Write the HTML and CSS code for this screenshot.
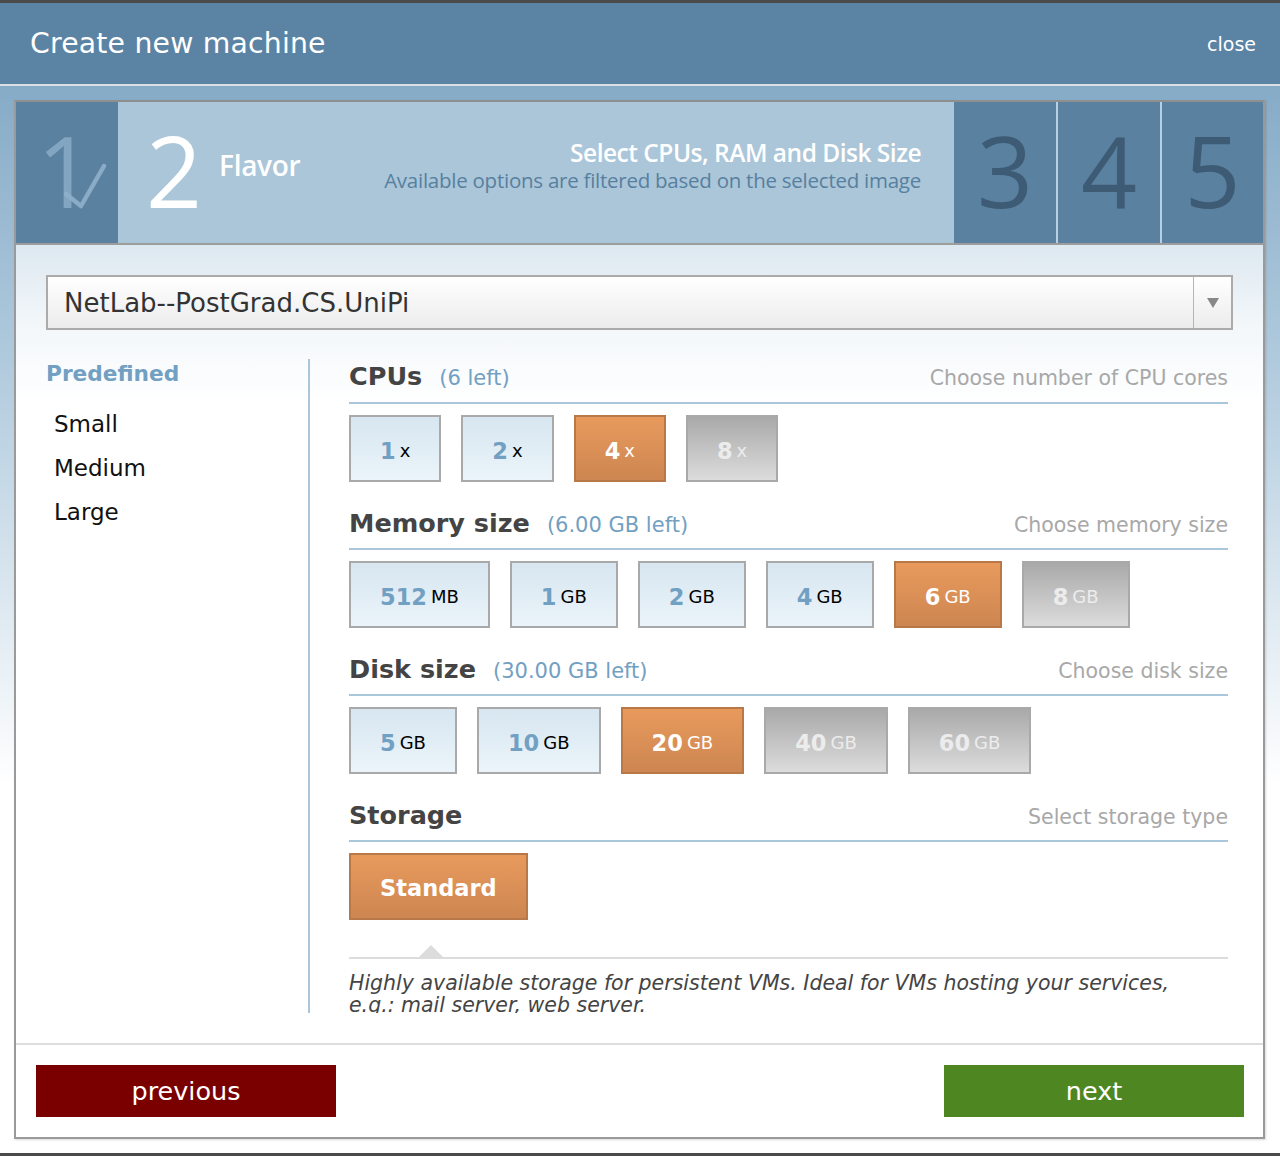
FILE: index.html
```html
<!DOCTYPE html>
<html>
<head>
<meta charset="utf-8">
<link rel="stylesheet" href="styles.css">
</head>
<body>
<div class="topstrip"></div>
<header class="header">
  <h1 class="title">Create new machine</h1>
  <span class="close">close</span>
</header>
<div class="stage">
  <div class="dialog">
    <div class="steps">
      <div class="step step-done">
        <span class="num">1</span>
        <svg class="check" width="60" height="60" viewBox="0 0 60 60"><path d="M8 36 L23 48 L46 8" fill="none" stroke="#8fb0ca" stroke-width="4.5" stroke-linecap="round" stroke-linejoin="round" opacity="0.9"/></svg>
      </div>
      <div class="step step-active">
        <span class="num">2</span>
        <span class="step-name">Flavor</span>
        <div class="step-desc">
          <div class="step-desc-title">Select CPUs, RAM and Disk Size</div>
          <div class="step-desc-sub">Available options are filtered based on the selected image</div>
        </div>
      </div>
      <div class="step step-todo"><span class="num">3</span></div>
      <div class="step step-todo sep"><span class="num">4</span></div>
      <div class="step step-todo sep last"><span class="num">5</span></div>
    </div>

    <div class="content">
      <div class="select">
        <span class="select-text">NetLab--PostGrad.CS.UniPi</span>
        <span class="select-arrow"><span class="tri"></span></span>
      </div>

      <div class="columns">
        <aside class="presets">
          <div class="presets-title">Predefined</div>
          <ul class="preset-list">
            <li>Small</li>
            <li>Medium</li>
            <li>Large</li>
          </ul>
        </aside>

        <section class="options">
          <div class="opt-head first">
            <span class="opt-title">CPUs</span>
            <span class="opt-left">(6 left)</span>
            <span class="opt-hint">Choose number of CPU cores</span>
          </div>
          <div class="choices">
            <span class="choice"><b>1</b>x</span>
            <span class="choice"><b>2</b>x</span>
            <span class="choice selected"><b>4</b>x</span>
            <span class="choice disabled"><b>8</b>x</span>
          </div>

          <div class="opt-head">
            <span class="opt-title">Memory size</span>
            <span class="opt-left">(6.00 GB left)</span>
            <span class="opt-hint">Choose memory size</span>
          </div>
          <div class="choices">
            <span class="choice"><b>512</b>MB</span>
            <span class="choice"><b>1</b>GB</span>
            <span class="choice"><b>2</b>GB</span>
            <span class="choice"><b>4</b>GB</span>
            <span class="choice selected"><b>6</b>GB</span>
            <span class="choice disabled"><b>8</b>GB</span>
          </div>

          <div class="opt-head">
            <span class="opt-title">Disk size</span>
            <span class="opt-left">(30.00 GB left)</span>
            <span class="opt-hint">Choose disk size</span>
          </div>
          <div class="choices">
            <span class="choice"><b>5</b>GB</span>
            <span class="choice"><b>10</b>GB</span>
            <span class="choice selected"><b>20</b>GB</span>
            <span class="choice disabled"><b>40</b>GB</span>
            <span class="choice disabled"><b>60</b>GB</span>
          </div>

          <div class="opt-head">
            <span class="opt-title">Storage</span>
            <span class="opt-hint">Select storage type</span>
          </div>
          <div class="choices">
            <span class="choice selected storage"><b>Standard</b></span>
          </div>
          <div class="storage-desc">
            <div class="desc-rule"><span class="desc-tri"></span></div>
            <p class="desc-text">Highly available storage for persistent VMs. Ideal for VMs hosting your services, e.g.: mail server, web server.</p>
          </div>
        </section>
      </div>
    </div>

    <footer class="footer">
      <span class="btn btn-prev">previous</span>
      <span class="btn btn-next">next</span>
    </footer>
  </div>
</div>
<div class="bottomstrip"></div>
</body>
</html>
```

FILE: styles.css
```css
html, body {
  margin: 0;
  padding: 0;
}
body {
  width: 1280px;
  height: 1156px;
  overflow: hidden;
  font-family: "DejaVu Sans", Verdana, sans-serif;
  background: #fff;
}
.topstrip {
  height: 3px;
  background: #4a4a4a;
}
.header {
  height: 81px;
  background: #5b84a4;
  border-bottom: 2px solid #d9dfe4;
  display: flex;
  align-items: center;
  justify-content: space-between;
  padding: 0 24px 0 30px;
}
.title {
  margin: 0;
  font-weight: normal;
  font-size: 28.3px;
  color: #fff;
  letter-spacing: 0.2px;
}
.close {
  color: #fff;
  font-size: 19px;
}
.stage {
  height: 1067px;
  padding: 14px 0 0 14px;
  box-sizing: border-box;
  background: linear-gradient(to bottom, #86abc7 0px, #b4cddf 300px, #ffffff 700px);
}
.dialog {
  width: 1251px;
  height: 1039px;
  box-sizing: border-box;
  border: 2px solid #9a9a9a;
  border-top-color: #8f8f8f;
  background: #fff;
  display: flex;
  flex-direction: column;
  box-shadow: 1px 1px 2px rgba(0,0,0,0.15);
}
.bottomstrip {
  height: 3px;
  background: #4a4a4a;
}

/* steps */
.steps {
  display: flex;
  height: 141px;
  border-bottom: 2px solid #9c9c9c;
  background: #5b80a0;
}
.step {
  position: relative;
  width: 102px;
  flex: none;
  display: flex;
  align-items: center;
  justify-content: center;
  background: #5b81a1;
}
.num {
  font-family: "Open Sans", "DejaVu Sans", sans-serif;
  font-size: 98px;
  line-height: 1;
  font-weight: 400;
  margin-top: -6px;
}
.step-done .num {
  color: #85a8c4;
  opacity: 0.95;
  margin-left: -4px;
}
.check {
  position: absolute;
  left: 42px;
  top: 56px;
}
.step-active {
  width: 836px;
  background: #abc6d9;
  justify-content: flex-start;
  padding-left: 28px;
  padding-right: 33px;
  box-sizing: border-box;
}
.step-active .num {
  color: #fff;
}
.step-name {
  font-family: "Open Sans", "DejaVu Sans", sans-serif;
  color: #fff;
  font-size: 28px;
  font-weight: 600;
  margin-left: 17px;
  margin-top: -16px;
  letter-spacing: -0.3px;
}
.step-desc {
  margin-left: auto;
  text-align: right;
  font-family: "Open Sans", "DejaVu Sans", sans-serif;
  margin-top: -14px;
}
.step-desc-title {
  color: #fff;
  font-size: 24.5px;
  font-weight: 600;
  line-height: 28px;
  letter-spacing: -0.5px;
}
.step-desc-sub {
  color: #57809f;
  font-size: 20.5px;
  line-height: 26px;
  letter-spacing: -0.25px;
}
.step-todo .num {
  color: #3d5b74;
}
.sep {
  border-left: 2px solid #b7cfe0;
}
.last {
  width: 101px;
}

/* content */
.content {
  flex: 1;
  padding: 30px 30px 0 30px;
  background: linear-gradient(to bottom, #dde8f0 0px, #f3f7fa 80px, #ffffff 160px);
}
.select {
  height: 55px;
  box-sizing: border-box;
  border: 2px solid #ababab;
  background: linear-gradient(to bottom, #ffffff, #ececec);
  display: flex;
  align-items: center;
}
.select-text {
  flex: 1;
  padding-left: 16px;
  font-size: 26px;
  color: #333;
}
.select-arrow {
  width: 37px;
  align-self: stretch;
  border-left: 1px solid #b5b5b5;
  display: flex;
  align-items: center;
  justify-content: center;
}
.tri {
  width: 0;
  height: 0;
  border-left: 6px solid transparent;
  border-right: 6px solid transparent;
  border-top: 10px solid #888;
}
.columns {
  display: flex;
  margin-top: 29px;
  height: 654px;
  overflow: hidden;
}
.presets {
  width: 262px;
  flex: none;
  border-right: 2px solid #a9c6da;
}
.presets-title {
  color: #72a0c2;
  font-weight: bold;
  font-size: 21.7px;
  line-height: 30px;
}
.preset-list {
  list-style: none;
  margin: 13px 0 0 0;
  padding: 0 0 0 8px;
}
.preset-list li {
  font-size: 23px;
  line-height: 44px;
  color: #111;
}
.options {
  flex: 1;
  margin-left: 39px;
  margin-right: 5px;
}
.opt-head {
  display: flex;
  align-items: baseline;
  height: 68px;
  box-sizing: border-box;
  padding-top: 26px;
  border-bottom: 2px solid #a9c6da;
}
.opt-head.first {
  height: 45px;
  padding-top: 2px;
}
.opt-title {
  font-weight: bold;
  font-size: 25.5px;
  color: #444;
  line-height: 30px;
}
.opt-left {
  margin-left: 17px;
  color: #72a0c2;
  font-size: 21px;
}
.opt-hint {
  margin-left: auto;
  color: #a8a8a8;
  font-size: 20.5px;
}
.choices {
  display: flex;
  gap: 20px;
  margin-top: 11px;
}
.choice {
  height: 67px;
  box-sizing: border-box;
  border: 2px solid #a9a9a9;
  background: linear-gradient(to bottom, #d7e6f0, #ebf4fa);
  display: inline-flex;
  align-items: center;
  justify-content: center;
  padding: 4px 29px 0 29px;
  font-size: 18px;
  color: #000;
}
.choice b {
  font-size: 22.5px;
  color: #72a0c2;
  margin-right: 4px;
}
.choice.selected {
  background: linear-gradient(to bottom, #e89a5c, #cd8651);
  border-color: #b97848;
  color: #fff;
}
.choice.selected b {
  color: #fff;
}
.choice.disabled {
  background: linear-gradient(to bottom, #a9a9a9, #dcdcdc);
  color: #ececec;
}
.choice.disabled b {
  color: #ececec;
}
.choice.storage {
  padding: 2px 29px 0 29px;
}
.choice.storage b {
  font-size: 22.5px;
  margin: 0;
}
.storage-desc {
  margin-top: 37px;
}
.desc-rule {
  position: relative;
  height: 2px;
  background: #dcdcdc;
}
.desc-tri {
  position: absolute;
  left: 70px;
  top: -12px;
  width: 0;
  height: 0;
  border-left: 12px solid transparent;
  border-right: 12px solid transparent;
  border-bottom: 12px solid #dcdcdc;
}
.desc-text {
  margin: 13px 0 0 0;
  max-width: 850px;
  font-style: italic;
  font-size: 20.5px;
  line-height: 22px;
  color: #444;
}

/* footer */
.footer {
  height: 94px;
  box-sizing: border-box;
  border-top: 2px solid #dddddd;
  display: flex;
  justify-content: space-between;
  align-items: flex-start;
  padding: 20px 19px 0 20px;
}
.btn {
  width: 300px;
  height: 52px;
  display: flex;
  align-items: center;
  justify-content: center;
  color: #fff;
  font-size: 25.5px;
  box-sizing: border-box;
}
.btn-prev {
  background: #7a0000;
}
.btn-next {
  background: #4e8722;
}
```
